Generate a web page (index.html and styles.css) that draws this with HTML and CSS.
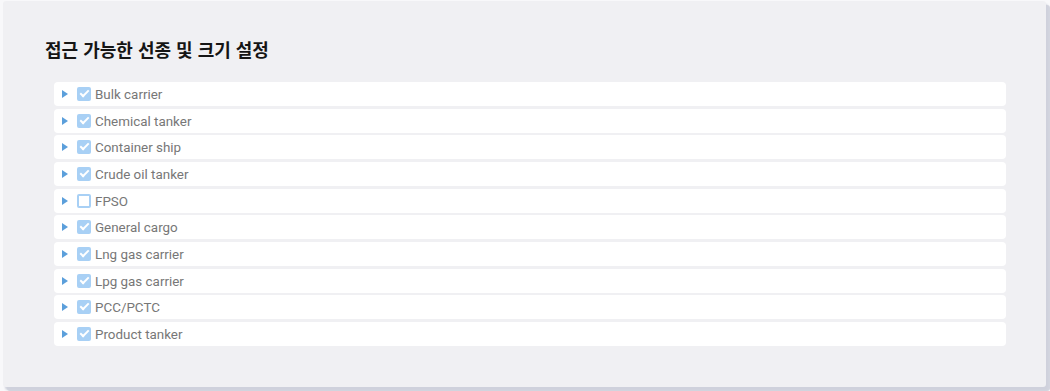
FILE: index.html
```html
<!DOCTYPE html>
<html lang="ko">
<head>
    <meta charset="UTF-8">
    <meta name="viewport" content="width=device-width, initial-scale=1.0">
    <title>접근 가능한 선종 및 크기 설정</title>
    <link rel="stylesheet" href="styles.css">
</head>
<body>
    <div class="panel">
        <h2 class="panel-title">접근 가능한 선종 및 크기 설정</h2>
        <ul class="ship-list">
            <li class="ship-row"><span class="caret"></span><span class="check on"></span><span class="label">Bulk carrier</span></li>
            <li class="ship-row"><span class="caret"></span><span class="check on"></span><span class="label">Chemical tanker</span></li>
            <li class="ship-row"><span class="caret"></span><span class="check on"></span><span class="label">Container ship</span></li>
            <li class="ship-row"><span class="caret"></span><span class="check on"></span><span class="label">Crude oil tanker</span></li>
            <li class="ship-row"><span class="caret"></span><span class="check"></span><span class="label">FPSO</span></li>
            <li class="ship-row"><span class="caret"></span><span class="check on"></span><span class="label">General cargo</span></li>
            <li class="ship-row"><span class="caret"></span><span class="check on"></span><span class="label">Lng gas carrier</span></li>
            <li class="ship-row"><span class="caret"></span><span class="check on"></span><span class="label">Lpg gas carrier</span></li>
            <li class="ship-row"><span class="caret"></span><span class="check on"></span><span class="label">PCC/PCTC</span></li>
            <li class="ship-row"><span class="caret"></span><span class="check on"></span><span class="label">Product tanker</span></li>
        </ul>
    </div>
</body>
</html>
```

FILE: styles.css
```css
body {
    margin: 0;
    height: 391px;
    background: #f8f8fa;
    font-family: Roboto, 'Noto Sans', 'Noto Sans CJK KR', sans-serif;
    overflow: hidden;
}

.panel {
    margin: 1px 4px 0 3px;
    height: 386px;
    box-sizing: border-box;
    padding: 34px 40px 0 42px;
    background: #f0f0f3;
    border-radius: 3px;
    box-shadow: 2px 3px 2px #cfd1dc, 4px 4px 0 #d3d5df;
}

.panel-title {
    margin: 0 0 19px;
    font-family: 'Noto Sans CJK KR', sans-serif;
    font-size: 18px;
    font-weight: 700;
    line-height: 28px;
    color: #151515;
}

.ship-list {
    list-style: none;
    margin: 0;
    padding: 0 0 0 9px;
    display: flex;
    flex-direction: column;
    gap: 2.67px;
}

.ship-row {
    display: flex;
    align-items: center;
    height: 24px;
    padding-left: 8px;
    background: #fff;
    border-radius: 4px;
    font-size: 13.4px;
    color: #777;
}

.caret {
    width: 0;
    height: 0;
    border-top: 4px solid transparent;
    border-bottom: 4px solid transparent;
    border-left: 6px solid #5b9fdb;
    margin-right: 9px;
}

.check {
    position: relative;
    width: 14px;
    height: 14px;
    box-sizing: border-box;
    border: 2px solid #a8d0f5;
    border-radius: 2px;
    background: #fff;
    margin-right: 4px;
}

.check.on {
    background: #a8d0f5;
}

.check.on::after {
    content: '';
    position: absolute;
    left: 1px;
    top: 1px;
    width: 7px;
    height: 3px;
    border-left: 2px solid #fff;
    border-bottom: 2px solid #fff;
    transform: rotate(-45deg);
}

.label {
    line-height: 24px;
    padding-top: 2px;
}
```
